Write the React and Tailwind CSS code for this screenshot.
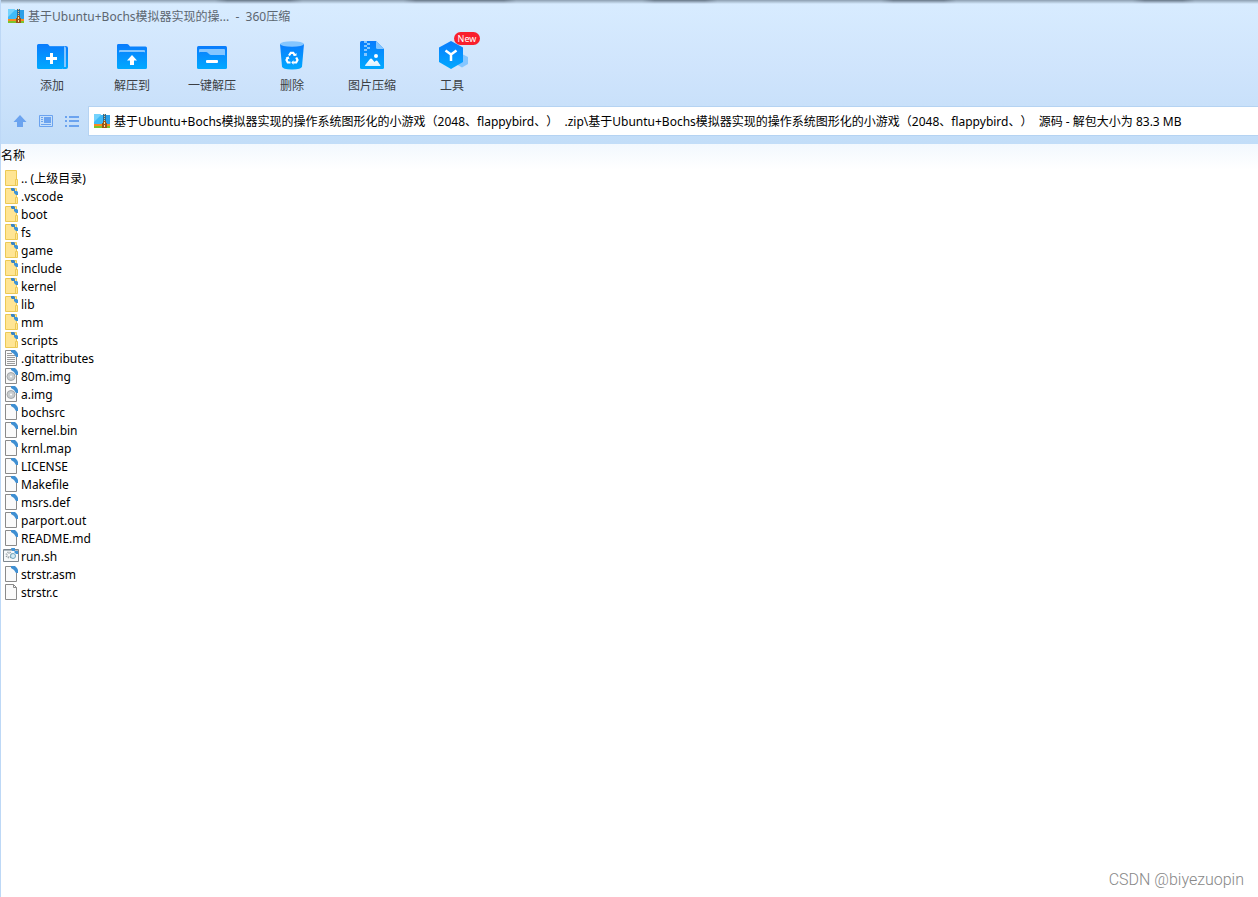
import React from 'react';

const ARCHIVE = '基于Ubuntu+Bochs模拟器实现的操作系统图形化的小游戏（2048、flappybird、）';

const files = [
  { name: '.. (上级目录)', type: 'parent' },
  { name: '.vscode', type: 'folder' },
  { name: 'boot', type: 'folder' },
  { name: 'fs', type: 'folder' },
  { name: 'game', type: 'folder' },
  { name: 'include', type: 'folder' },
  { name: 'kernel', type: 'folder' },
  { name: 'lib', type: 'folder' },
  { name: 'mm', type: 'folder' },
  { name: 'scripts', type: 'folder' },
  { name: '.gitattributes', type: 'text' },
  { name: '80m.img', type: 'disc' },
  { name: 'a.img', type: 'disc' },
  { name: 'bochsrc', type: 'file' },
  { name: 'kernel.bin', type: 'file' },
  { name: 'krnl.map', type: 'file' },
  { name: 'LICENSE', type: 'file' },
  { name: 'Makefile', type: 'file' },
  { name: 'msrs.def', type: 'file' },
  { name: 'parport.out', type: 'file' },
  { name: 'README.md', type: 'file' },
  { name: 'run.sh', type: 'script' },
  { name: 'strstr.asm', type: 'file' },
  { name: 'strstr.c', type: 'plain' },
];

function ArchiveLogo() {
  return (
    <svg width="16" height="16" viewBox="0 0 16 16" className="shrink-0" aria-hidden="true">
      <path d="M0 1h6l1 1h9v9H0z" fill="#3dbaf7" />
      <path d="M0 1h6l1 1L0 9z" fill="#74d2fc" />
      <path d="M12 2h4v9h-4z" fill="#2a9fe8" />
      <path d="M0 11h16v2H0z" fill="#fb8a1e" />
      <path d="M0 13h16v2H0z" fill="#7cc42c" />
      <path d="M9 1h3v9H9z" fill="#2b6a94" />
      <path d="M10 1h1v1h-1zM10 3h1v1h-1zM10 5h1v1h-1zM10 7h1v1h-1z" fill="#e9c27a" />
      <path d="M9 8h3v2h1v5H8v-5h1z" fill="#9a5416" />
      <path d="M10 9h1v2h-1zM10 12h1v2h-1z" fill="#ffe29a" />
    </svg>
  );
}

// Shared blue gradient for the toolbar glyphs
function BlueGradient({ id }) {
  return (
    <linearGradient id={id} x1="0" y1="0" x2="0" y2="1">
      <stop offset="0" stopColor="#0a7cfd" />
      <stop offset="1" stopColor="#00a9ff" />
    </linearGradient>
  );
}

function AddIcon() {
  return (
    <svg width="32" height="32" viewBox="0 0 32 32" aria-hidden="true">
      <defs><BlueGradient id="add" /></defs>
      <path d="M27 5h2.500Q32 5 32 7v19q0 2-2 2h-3z" fill="url(#add)" />
      <path d="M2.500 3H11q1 0 1.700 1l1 1.200H28q2 0 2 2V26H3z" fill="#85c6ff" />
      <path d="M2.500 3H11q1 0 1.700 1l1 1.200H28V26q0 2-2 2H2.500Q1 28 1 26.500v-22Q1 3 2.500 3z" fill="url(#add)" />
      <path d="M14 12h3v4h4v3h-4v4h-3v-4h-4v-3h4z" fill="#fff" />
    </svg>
  );
}

function ExtractIcon() {
  return (
    <svg width="32" height="32" viewBox="0 0 32 32" aria-hidden="true">
      <defs><BlueGradient id="extract" /></defs>
      <path d="M2 3h9q1 0 1.600.800L14 5.500h15.500Q31 5.500 31 7v19.500q0 1.500-1.500 1.500h-27Q1 28 1 26.500V4.500Q1 3 2 3z" fill="url(#extract)" />
      <path d="M3 12v-2q0-1 1-1h24q1 0 1 1v2q0-1-1-1H4q-1 0-1 1z" fill="#85c6ff" />
      <path d="M16 14l5 5.500h-3V24h-4v-4.500h-3z" fill="#fff" />
    </svg>
  );
}

function OneClickIcon() {
  return (
    <svg width="32" height="32" viewBox="0 0 32 32" aria-hidden="true">
      <defs><BlueGradient id="oneclick" /></defs>
      <rect x="1" y="5" width="30" height="23" rx="1.500" fill="url(#oneclick)" />
      <path d="M3 9q0-1 1-1h24q1 0 1 1v6q0-1-1-1H15q-1 0-2-1l-1-1q-1-1-2-1H4q-1 0-1 1z" fill="#85c6ff" />
      <rect x="10" y="19" width="12" height="3" rx="1" fill="#fff" />
    </svg>
  );
}

function DeleteIcon() {
  return (
    <svg width="32" height="32" viewBox="0 0 32 32" aria-hidden="true">
      <defs><BlueGradient id="delete" /></defs>
      <path d="M4 3h24l-2 22.500q-.3 3-10 3t-10-3z" fill="url(#delete)" />
      <ellipse cx="16" cy="3" rx="12" ry="2.800" fill="#85c6ff" />
      <g fill="none" stroke="#fff" strokeWidth="2.200">
        <path d="M13 14.500l1.800-2.700h2.400l1.800 2.700" />
        <path d="M20.200 16.500l1.300 2.500-1.300 2.500h-3" />
        <path d="M14.500 21.500h-2.700L10.500 19l1.300-2.500" />
      </g>
      <path d="M17 14.800h3.500V12zM17.500 19.200v4.600l-2.200-2.300zM9.500 17l3-1.800 1 3z" fill="#fff" />
    </svg>
  );
}

function ImageZipIcon() {
  return (
    <svg width="32" height="32" viewBox="0 0 32 32" aria-hidden="true">
      <defs>
        <BlueGradient id="image" />
        <linearGradient id="hill" x1="0" y1="0" x2="0" y2="1">
          <stop offset="0" stopColor="#fff" />
          <stop offset="1" stopColor="#d9f1ff" />
        </linearGradient>
      </defs>
      <path d="M5.500 0H20l8 8v18.500q0 1.500-1.500 1.500h-21Q4 28 4 26.500v-25Q4 0 5.500 0z" fill="url(#image)" />
      <path d="M20 0l8 8h-6.500Q20 8 20 6.500z" fill="#85c6ff" />
      <path d="M8 0h3v2H8zM11 2h3v2h-3zM8 4h3v2H8zM11 6h3v2h-3zM8 8h3v2H8zM8 12h3v3H8z" fill="#85c6ff" />
      <path d="M9 25q0-1 1-2l4-5q1-1 2 0l2.500 3 1-1q1-1 2 0l2 3q1 1 1 2z" fill="url(#hill)" />
      <circle cx="20" cy="15" r="2" fill="#fff" />
    </svg>
  );
}

function ToolsIcon() {
  return (
    <svg width="32" height="32" viewBox="0 0 32 32" aria-hidden="true">
      <defs><BlueGradient id="tools" /></defs>
      <path d="M26 13l6 3v7l-6 3.500-6-3.500v-7z" fill="#85c6ff" />
      <path d="M15 0l12 6.500v14.500L15 28 3 21V6.500z" fill="url(#tools)" />
      <path d="M9.500 9.500l5.500 4 5.500-4M15 13.500V20" fill="none" stroke="#fff" strokeWidth="2.500" />
    </svg>
  );
}

const tools = [
  { label: '添加', icon: AddIcon },
  { label: '解压到', icon: ExtractIcon },
  { label: '一键解压', icon: OneClickIcon },
  { label: '删除', icon: DeleteIcon },
  { label: '图片压缩', icon: ImageZipIcon },
  { label: '工具', icon: ToolsIcon, badge: 'New' },
];

function ShortcutMark() {
  return (
    <g>
      <path d="M8 0h3l1 1v2H9L8 2z" fill="#3a86c4" />
      <path d="M11 3h3l1 1v3h-2l-2-2z" fill="#3f94d8" />
    </g>
  );
}

function FileIcon({ type }) {
  if (type === 'parent' || type === 'folder') {
    return (
      <svg width="16" height="16" viewBox="0 0 16 16" aria-hidden="true">
        <path d="M2.500.5h11v15h-11z" fill="#ffe594" stroke="#ecc955" />
        <path d="M12.500 9.500h2v6h-2z" fill="#ffe594" stroke="#ecc955" />
        {type === 'folder' && <ShortcutMark />}
      </svg>
    );
  }
  if (type === 'script') {
    return (
      <svg width="16" height="16" viewBox="0 0 16 16" aria-hidden="true">
        <path d="M.5 1.500h15v12H.5z" fill="#f7f9fa" stroke="#7d878f" />
        <path d="M1 2h14v1H1z" fill="#aeb8bf" />
        <circle cx="6" cy="7" r="2.500" fill="none" stroke="#8d969c" strokeDasharray="1 1" strokeWidth="2" />
        <circle cx="10" cy="8" r="2.500" fill="#d4ecf7" stroke="#6fa5bd" />
        <path d="M8 0h4v3H9zM12 3h3v3h-2l-2-2z" fill="#3f94d8" />
      </svg>
    );
  }
  return (
    <svg width="16" height="16" viewBox="0 0 16 16" aria-hidden="true">
      <path d="M2.500.5h8l3 3v12h-11z" fill="#fafafa" stroke="#8a8a8a" />
      {type === 'text' && <path d="M4 3.500h5M4 5.500h8M4 7.500h8M4 9.500h8M4 11.500h8M4 13.500h8" stroke="#9c9c9c" />}
      {type === 'disc' && (
        <g>
          <circle cx="8" cy="8.500" r="4" fill="#c9cdcf" stroke="#a3a7aa" />
          <circle cx="8" cy="8.500" r="1" fill="#fff" />
        </g>
      )}
      {type === 'plain' ? (
        <path d="M10.500.5v3h3" fill="none" stroke="#8a8a8a" />
      ) : (
        <path d="M8 0h4l2 2 1 2v3h-2l-2-3-3-2z" fill="#3f8fd2" />
      )}
    </svg>
  );
}

export default function App() {
  return (
    <div className="relative min-h-screen border-l border-[#bdd8f6] bg-white font-['Noto_Sans','Noto_Sans_CJK_SC',sans-serif] text-xs text-black">
      <div className="absolute inset-x-0 top-0 h-1 bg-[linear-gradient(90deg,#93a5b7_17%,#6f7f90_18%,#6f7f90_23%,#93a5b7_24%,#93a5b7_32%,#6f7f90_33%,#6f7f90_40%,#93a5b7_41%,#93a5b7_51%,#6f7f90_52%,#6f7f90_56%,#93a5b7_57%,#93a5b7_70%,#6f7f90_71%,#6f7f90_75%,#93a5b7_76%,#93a5b7_90%,#6f7f90_91%,#6f7f90_94%,#93a5b7_95%)] mask-b-from-10%" />

      <header className="bg-linear-to-b from-[#d8ecff] via-[#cfe4fc] to-[#c2ddf8]">
        <div className="flex h-8 items-center gap-1 pl-[7px]">
          <ArchiveLogo />
          <h1 className="pt-0.5 whitespace-pre text-[#5c6670]">{'基于Ubuntu+Bochs模拟器实现的操...  -  360压缩'}</h1>
        </div>

        <div className="flex h-[74px] pl-[11px]">
          {tools.map((tool) => {
            const Icon = tool.icon;
            return (
              <button key={tool.label} type="button" className="relative flex w-20 flex-col items-center gap-[5px] pt-[9px] text-[#3c3f44]">
                <Icon />
                <span className="leading-4">{tool.label}</span>
                {tool.badge && (
                  <span className="absolute top-0 right-3 h-[13px] w-[26px] rounded-full bg-[#f91f2d] text-center text-[9px] leading-[13px] text-white">
                    {tool.badge}
                  </span>
                )}
              </button>
            );
          })}
        </div>

        <div className="flex items-center pb-2">
          <div className="flex w-[87px] shrink-0 items-center gap-3 pl-3 text-[#6ba3ef]">
            <button type="button" aria-label="上级目录">
              <svg width="14" height="14" viewBox="0 0 14 14" fill="currentColor" aria-hidden="true">
                <path d="M7 1l6.500 7H10v5H4V8H.5z" />
              </svg>
            </button>
            <button type="button" aria-label="预览">
              <svg width="14" height="14" viewBox="0 0 14 14" fill="none" stroke="currentColor" aria-hidden="true">
                <path d="M.5 1.500h13v11H.5z" />
                <path d="M5 3h7v6H5z" fill="currentColor" stroke="none" />
                <path d="M2 3.500h2M2 5.500h2M2 7.500h2M2 10.500h10" />
              </svg>
            </button>
            <button type="button" aria-label="列表">
              <svg width="14" height="14" viewBox="0 0 14 14" fill="currentColor" aria-hidden="true">
                <path d="M0 2h2v2H0zM4 2h10v2H4zM0 6h2v2H0zM4 6h10v2H4zM0 11h2v2H0zM4 11h10v2H4z" />
              </svg>
            </button>
          </div>
          <label className="flex h-[30px] min-w-0 flex-1 items-center gap-1 border border-r-0 border-[#b5d3f2] bg-white pl-[5px]">
            <ArchiveLogo />
            <input
              type="text"
              aria-label="路径"
              readOnly
              value={`${ARCHIVE}  .zip\\${ARCHIVE}  源码 - 解包大小为 83.3 MB`}
              className="min-w-0 flex-1 pt-0.5 outline-none [text-spacing-trim:space-all]"
            />
          </label>
        </div>
      </header>

      <main className="bg-linear-to-b from-[#f2f8fe] to-white to-[26px]">
        <table className="w-full border-collapse text-left">
          <thead>
            <tr>
              <th className="h-[25px] p-0 pb-px font-normal">名称</th>
            </tr>
          </thead>
          <tbody>
            {files.map((file) => (
              <tr key={file.name}>
                <td className="p-0">
                  <div className="flex h-[18px] items-center gap-[2px] pl-[2px]">
                    <FileIcon type={file.type} />
                    <span className="pt-0.5">{file.name}</span>
                  </div>
                </td>
              </tr>
            ))}
          </tbody>
        </table>
      </main>

      <footer className="absolute right-[14px] bottom-[7px] font-[Roboto,sans-serif] text-base leading-5 font-light text-[#888]">
        CSDN @biyezuopin
      </footer>
    </div>
  );
}
